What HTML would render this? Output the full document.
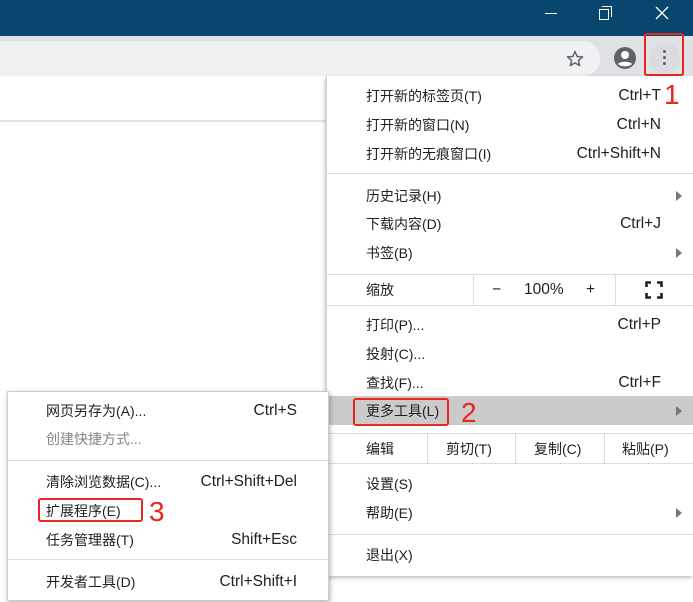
<!DOCTYPE html>
<html><head><meta charset="utf-8"><style>
*{margin:0;padding:0;box-sizing:border-box}
body{width:693px;height:602px;position:relative;overflow:hidden;background:#fff;font-family:"Liberation Sans","Noto Sans CJK SC",sans-serif;font-size:14px;color:#202124}
.a{position:absolute}
.t{position:absolute;line-height:18px;white-space:nowrap}
.r{position:absolute;line-height:18px;white-space:nowrap;font-size:15.5px;text-align:right}
.m{right:32px}
.s{right:396px}
.sep{position:absolute;height:1px;background:#dadce0}
.arr{position:absolute;width:0;height:0;border-top:5px solid transparent;border-bottom:5px solid transparent;border-left:6px solid #777}
.red{position:absolute;border:2px solid #e8261f;border-radius:3px}
.num{position:absolute;color:#e8261f;font-size:28px;line-height:30px}
</style></head><body>
<div class="a" style="left:0;top:0;width:693px;height:36px;background:#08466d"></div>
<div class="a" style="left:545px;top:13px;width:12px;height:1px;background:#fff"></div>
<div class="a" style="left:599px;top:9px;width:10px;height:11px;border:1px solid #fff"></div>
<div class="a" style="left:602px;top:6px;width:10px;height:11px;border-top:1px solid #fff;border-right:1px solid #fff"></div>
<svg class="a" style="left:655px;top:6px" width="14" height="14"><path d="M1 1L13 13M13 1L1 13" stroke="#fff" stroke-width="1.3"/></svg>
<div class="a" style="left:0;top:36px;width:693px;height:40px;background:#dfe1e5"></div>
<div class="a" style="left:0;top:41px;width:600px;height:35px;background:#eff1f2;border-radius:0 17px 17px 0"></div>
<svg class="a" style="left:565px;top:49px" width="20" height="20" viewBox="0 0 24 24"><path d="M12 3l2.6 6 6.4.5-4.9 4.2 1.5 6.3L12 16.6 6.4 20l1.5-6.3L3 9.5l6.4-.5z" fill="none" stroke="#5f6368" stroke-width="1.8" stroke-linejoin="round"/></svg>
<svg class="a" style="left:613px;top:46px" width="24" height="24" viewBox="0 0 24 24"><circle cx="12" cy="12" r="11" fill="#5f6368"/><circle cx="12" cy="9" r="4" fill="#fff"/><path d="M5 18c2-3 12-3 14 0c-3 3-11 3-14 0z" fill="#fff"/></svg>
<div class="a" style="left:649px;top:42px;width:31px;height:31px;border-radius:50%;background:#dadce0"></div>
<div class="a" style="left:663px;top:50px;width:3px;height:3px;border-radius:50%;background:#5f6368"></div>
<div class="a" style="left:663px;top:56px;width:3px;height:3px;border-radius:50%;background:#5f6368"></div>
<div class="a" style="left:663px;top:62px;width:3px;height:3px;border-radius:50%;background:#5f6368"></div>
<div class="red" style="left:644px;top:33px;width:40px;height:43px"></div>
<div class="a" style="left:0;top:120px;width:326px;height:2px;background:#e3e3e3"></div>

<div class="a" style="left:326px;top:76px;width:367px;height:500px;background:#fff;border-left:1px solid #d0d0d0;box-shadow:-1px 2px 4px rgba(0,0,0,.25)"></div>
<div class="t" style="left:366px;top:87px">打开新的标签页(T)</div><div class="r m" style="top:87px">Ctrl+T</div>
<div class="num" style="left:664px;top:80px">1</div>
<div class="t" style="left:366px;top:116px">打开新的窗口(N)</div><div class="r m" style="top:116px">Ctrl+N</div>
<div class="t" style="left:366px;top:145px">打开新的无痕窗口(I)</div><div class="r m" style="top:145px">Ctrl+Shift+N</div>
<div class="sep" style="left:327px;top:173px;width:366px"></div>
<div class="t" style="left:366px;top:187px">历史记录(H)</div><div class="arr" style="left:676px;top:191px"></div>
<div class="t" style="left:366px;top:215px">下载内容(D)</div><div class="r m" style="top:215px">Ctrl+J</div>
<div class="t" style="left:366px;top:244px">书签(B)</div><div class="arr" style="left:676px;top:248px"></div>
<div class="sep" style="left:327px;top:274px;width:366px"></div>
<div class="t" style="left:366px;top:281px">缩放</div>
<div class="sep" style="left:473px;top:275px;width:1px;height:30px"></div>
<div class="t" style="left:492px;top:281px;font-size:15.5px">−</div><div class="t" style="left:524px;top:281px;font-size:15.5px">100%</div><div class="t" style="left:586px;top:281px;font-size:15.5px">+</div>
<div class="sep" style="left:615px;top:275px;width:1px;height:30px"></div>
<svg class="a" style="left:645px;top:281px" width="18" height="18"><path d="M1.5 6V1.5H6M12 1.5H16.5V6M16.5 12V16.5H12M6 16.5H1.5V12" fill="none" stroke="#202124" stroke-width="2.6"/></svg>
<div class="sep" style="left:327px;top:305px;width:366px"></div>
<div class="t" style="left:366px;top:316px">打印(P)...</div><div class="r m" style="top:316px">Ctrl+P</div>
<div class="t" style="left:366px;top:345px">投射(C)...</div>
<div class="t" style="left:366px;top:374px">查找(F)...</div><div class="r m" style="top:374px">Ctrl+F</div>
<div class="a" style="left:327px;top:396px;width:366px;height:29px;background:#cbcbcb"></div>
<div class="t" style="left:366px;top:402px">更多工具(L)</div><div class="arr" style="left:676px;top:406px"></div>
<div class="red" style="left:353px;top:398px;width:96px;height:28px"></div>
<div class="num" style="left:461px;top:398px">2</div>
<div class="sep" style="left:327px;top:433px;width:366px"></div>
<div class="t" style="left:366px;top:440px">编辑</div>
<div class="sep" style="left:427px;top:434px;width:1px;height:29px"></div>
<div class="t" style="left:446px;top:440px">剪切(T)</div>
<div class="sep" style="left:515px;top:434px;width:1px;height:29px"></div>
<div class="t" style="left:534px;top:440px">复制(C)</div>
<div class="sep" style="left:604px;top:434px;width:1px;height:29px"></div>
<div class="t" style="left:622px;top:440px">粘贴(P)</div>
<div class="sep" style="left:327px;top:463px;width:366px"></div>
<div class="t" style="left:366px;top:475px">设置(S)</div>
<div class="t" style="left:366px;top:504px">帮助(E)</div><div class="arr" style="left:676px;top:508px"></div>
<div class="sep" style="left:327px;top:534px;width:366px"></div>
<div class="t" style="left:366px;top:546px">退出(X)</div>

<div class="a" style="left:7px;top:391px;width:322px;height:210px;background:#fff;border:1px solid #ccc;box-shadow:1px 2px 5px rgba(0,0,0,.3)"></div>
<div class="t" style="left:46px;top:402px">网页另存为(A)...</div><div class="r s" style="top:402px">Ctrl+S</div>
<div class="t" style="left:46px;top:430px;color:#80868b">创建快捷方式...</div>
<div class="sep" style="left:8px;top:460px;width:320px"></div>
<div class="t" style="left:46px;top:473px">清除浏览数据(C)...</div><div class="r s" style="top:473px">Ctrl+Shift+Del</div>
<div class="t" style="left:46px;top:502px">扩展程序(E)</div>
<div class="red" style="left:38px;top:498px;width:105px;height:24px"></div>
<div class="num" style="left:149px;top:497px">3</div>
<div class="t" style="left:46px;top:531px">任务管理器(T)</div><div class="r s" style="top:531px">Shift+Esc</div>
<div class="sep" style="left:8px;top:559px;width:320px"></div>
<div class="t" style="left:46px;top:573px">开发者工具(D)</div><div class="r s" style="top:573px">Ctrl+Shift+I</div>
</body></html>
